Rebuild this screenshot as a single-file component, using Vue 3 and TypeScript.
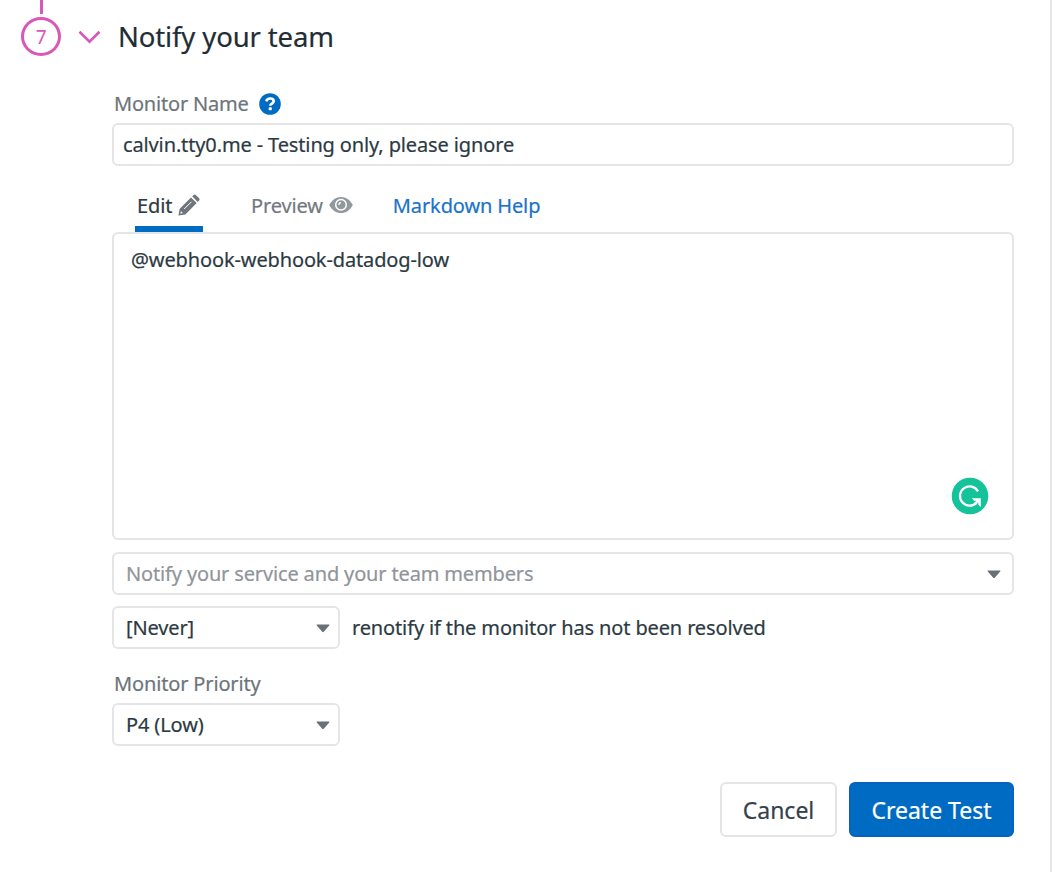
<script setup lang="ts">
import { ref } from 'vue'

const step = 7
const monitorName = ref('calvin.tty0.me - Testing only, please ignore')
const message = ref('@webhook-webhook-datadog-low')
const renotify = ref('[Never]')
const priority = ref('P4 (Low)')
</script>

<template>
  <main class="panel">
    <div class="rail">
      <div class="rail-line"></div>
      <div class="step">{{ step }}</div>
    </div>
    <section class="content">
      <header class="heading">
        <svg class="chevron" width="24" height="16" viewBox="0 0 24 16">
          <path d="M1.5 2.8 11.5 12.6 21.5 2.8" fill="none" stroke="#d957b8" stroke-width="2.6" />
        </svg>
        <h1>Notify your team</h1>
      </header>

      <div class="form">
        <div class="label name-label">
          <span>Monitor Name</span>
          <svg width="22" height="22" viewBox="0 0 22 22">
            <circle cx="11" cy="11" r="10.8" fill="#006bc2" />
            <path d="M7.3 8.3C7.9 6.3 9.2 5.5 11.1 5.5c2.1 0 3.6 1.1 3.6 2.8 0 2.4-3.4 2.3-3.4 4.5" fill="none" stroke="#fff" stroke-width="2.7" />
            <rect x="9.7" y="14.2" width="3.1" height="3.1" rx=".8" fill="#fff" />
          </svg>
        </div>
        <div class="box name-box">{{ monitorName }}</div>

        <nav class="tabs">
          <a class="tab active">
            <span>Edit</span>
            <svg width="22" height="22" viewBox="0 0 22 22">
              <path fill="#70777c" d="M.4 21.6 1.7 14.7 13 3.4l5.7 5.7L7.4 20.4ZM14.2 2.3l1.4-1.4q1-1 2.2 0l3.3 3.3q1 1.1 0 2.3l-1.4 1.4Z" />
              <path d="M6.2 15 13.4 7.8" fill="none" stroke="#fff" stroke-width="1" />
              <path d="M2.3 19.8 3 17.2 4.9 19.1Z" fill="#fff" />
            </svg>
          </a>
          <a class="tab preview">
            <span>Preview</span>
            <svg width="24" height="18" viewBox="0 0 24 18">
              <path d="M.2 9C2.9 3.8 7.1 .9 12 .9S21.1 3.8 23.8 9C21.1 14.2 16.9 17.1 12 17.1S2.9 14.2.2 9Z" fill="#92999d" />
              <circle cx="12" cy="8.8" r="5.3" fill="none" stroke="#fff" stroke-width="1.5" />
              <path d="M9.9 9Q9.9 6.8 12 6.7" fill="none" stroke="#fff" stroke-width="1.2" />
            </svg>
          </a>
          <a class="tab help">Markdown Help</a>
        </nav>

        <div class="box editor">
          {{ message }}
          <svg class="assistant" width="38" height="38" viewBox="0 0 38 38">
            <circle cx="19" cy="19" r="18.3" fill="#15c39a" />
            <path d="M27 14.4A9.6 9.6 0 1 0 25.6 25.6" fill="none" stroke="#fff" stroke-width="2.3" />
            <path d="M20.8 21.2H29.8V30.2L27.3 27.6V25.2L24.6 28 22.8 26.3 25.4 23.7H23.2Z" fill="#fff" />
          </svg>
        </div>

        <div class="box select notify">
          <span>Notify your service and your team members</span>
          <svg width="14" height="9" viewBox="0 0 14 9"><path d="M1.2.5H12.8Q14 .5 13.2 1.6L7.8 7.8Q7 8.7 6.2 7.8L.8 1.6Q0 .5 1.2.5Z" fill="#697178" /></svg>
        </div>

        <div class="renotify">
          <div class="box select small">
            <span>{{ renotify }}</span>
            <svg width="14" height="9" viewBox="0 0 14 9"><path d="M1.2.5H12.8Q14 .5 13.2 1.6L7.8 7.8Q7 8.7 6.2 7.8L.8 1.6Q0 .5 1.2.5Z" fill="#697178" /></svg>
          </div>
          <span>renotify if the monitor has not been resolved</span>
        </div>

        <div class="label priority-label">Monitor Priority</div>
        <div class="box select small">
          <span>{{ priority }}</span>
          <svg width="14" height="9" viewBox="0 0 14 9"><path d="M1.2.5H12.8Q14 .5 13.2 1.6L7.8 7.8Q7 8.7 6.2 7.8L.8 1.6Q0 .5 1.2.5Z" fill="#697178" /></svg>
        </div>

        <footer class="actions">
          <button class="cancel" type="button">Cancel</button>
          <button class="create" type="button">Create Test</button>
        </footer>
      </div>
    </section>
  </main>
</template>

<style>
body {
  background: #fff;
}
</style>

<style scoped>
* {
  box-sizing: border-box;
}
svg {
  display: block;
  flex: none;
}
.panel {
  display: flex;
  width: 1052px;
  height: 872px;
  border-right: 2px solid #e5e5e7;
  font-family: "Noto Sans", sans-serif;
  font-size: 20px;
  line-height: 28px;
  letter-spacing: -0.13px;
  -webkit-text-stroke: 0.2px currentColor;
  color: #2c3a43;
  white-space: nowrap;
}
.rail {
  display: flex;
  flex-direction: column;
  align-items: center;
  width: 82px;
  flex: none;
}
.rail-line {
  width: 3px;
  height: 14px;
  background: #d957b8;
}
.step {
  width: 40px;
  height: 39px;
  margin-top: 3px;
  border: 3px solid #d957b8;
  border-radius: 50%;
  color: #d957b8;
  font-size: 19px;
  line-height: 34px;
  text-align: center;
  -webkit-text-stroke: 0;
}
.content {
  width: 932px;
  flex: none;
}
.heading {
  display: flex;
  align-items: center;
  height: 74px;
  margin-left: -4px;
}
h1 {
  margin: 0 0 0 16px;
  font-size: 27.5px;
  font-weight: 400;
  line-height: 40px;
  color: #1f2d36;
}
.form {
  margin-left: 30px;
}
.label {
  padding-left: 2px;
  color: #6c757b;
}
.name-label {
  display: flex;
  align-items: center;
  gap: 10px;
  height: 28px;
  margin-top: 16px;
  letter-spacing: -0.2px;
}
.name-label svg {
  margin-top: -1px;
}
.box {
  border: 2px solid #e5e5e7;
  border-radius: 6px;
}
.name-box {
  height: 43px;
  margin-top: 5px;
  padding-left: 9px;
  line-height: 40px;
}
.tabs {
  display: flex;
  height: 66px;
  padding: 17px 0 0 23px;
  line-height: 45px;
}
.tab {
  display: flex;
  align-items: center;
  height: 49px;
}
.tab span,
.help {
  padding-top: 1px;
}
.active {
  width: 68px;
  padding-left: 2px;
  gap: 6px;
  border-bottom: 6px solid #006bc2;
}
.preview {
  height: 43px;
  margin-left: 48px;
  gap: 6px;
  color: #71797f;
}
.help {
  height: 43px;
  margin-left: 40px;
  color: #1a73c5;
}
.editor {
  position: relative;
  height: 308px;
  padding: 12px 17px;
}
.assistant {
  position: absolute;
  right: 23px;
  bottom: 23px;
}
.select {
  display: flex;
  align-items: center;
  justify-content: space-between;
  height: 43px;
  padding: 0 11px 0 12px;
}
.select svg {
  margin-top: 2px;
}
.notify {
  margin-top: 12px;
  color: #8f959a;
  letter-spacing: -0.15px;
}
.small {
  width: 228px;
  padding-right: 8px;
}
.renotify {
  display: flex;
  align-items: center;
  gap: 12px;
  margin-top: 11px;
  letter-spacing: -0.14px;
}
.priority-label {
  margin: 21px 0 5px;
  letter-spacing: -0.15px;
}
.actions {
  display: flex;
  justify-content: flex-end;
  gap: 12px;
  margin-top: 36px;
}
button {
  height: 55px;
  padding: 0;
  border: 2px solid #e5e5e7;
  border-radius: 6px;
  font: 400 23px/48px "Noto Sans", sans-serif;
}
.cancel {
  width: 117px;
  background: #fff;
  color: #35424b;
}
.create {
  width: 165px;
  border-color: #0562bf;
  background: #006bc2;
  color: #fff;
}
</style>
